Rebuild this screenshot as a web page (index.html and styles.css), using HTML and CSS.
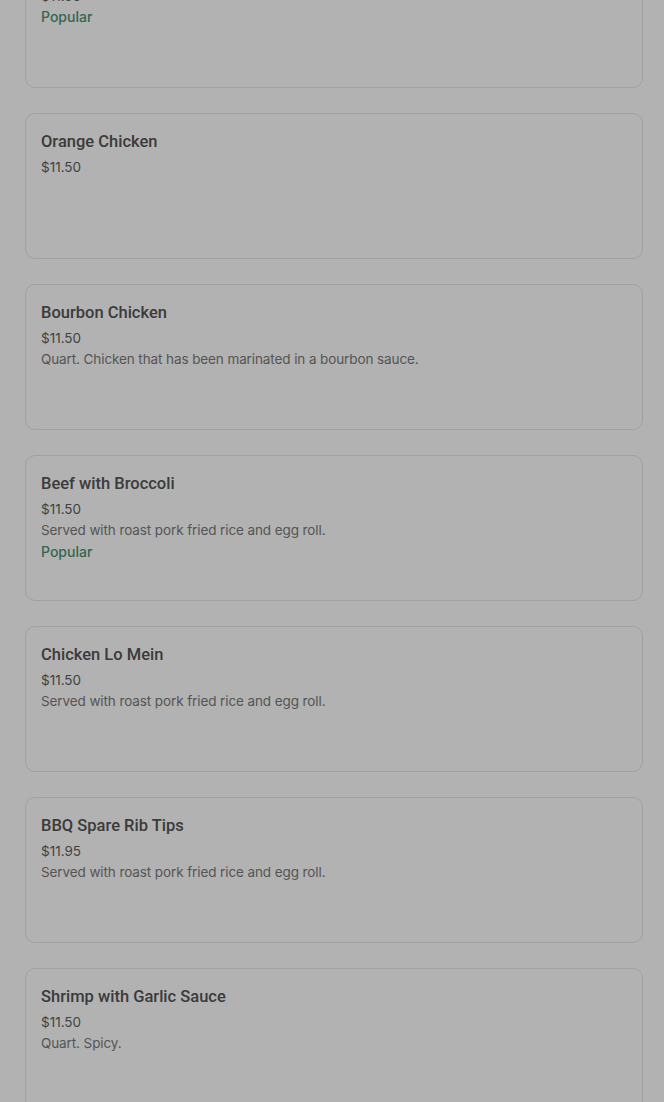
FILE: index.html
```html
<!DOCTYPE html>
<html lang="en">

<head>
    <meta charset="UTF-8">
    <title>Menu</title>
    <link rel="stylesheet" href="styles.css">
</head>

<body>
<div class="menu">
    <div class="item">
        <div class="item-name">General Tso's Chicken</div>
        <div class="item-price">$11.50</div>
        <div class="item-tag">Popular</div>
    </div>
    <div class="item">
        <div class="item-name">Orange Chicken</div>
        <div class="item-price">$11.50</div>
    </div>
    <div class="item">
        <div class="item-name">Bourbon Chicken</div>
        <div class="item-price">$11.50</div>
        <div class="item-desc">Quart. Chicken that has been marinated in a bourbon sauce.</div>
    </div>
    <div class="item">
        <div class="item-name">Beef with Broccoli</div>
        <div class="item-price">$11.50</div>
        <div class="item-desc">Served with roast pork fried rice and egg roll.</div>
        <div class="item-tag">Popular</div>
    </div>
    <div class="item">
        <div class="item-name">Chicken Lo Mein</div>
        <div class="item-price">$11.50</div>
        <div class="item-desc">Served with roast pork fried rice and egg roll.</div>
    </div>
    <div class="item">
        <div class="item-name">BBQ Spare Rib Tips</div>
        <div class="item-price">$11.95</div>
        <div class="item-desc">Served with roast pork fried rice and egg roll.</div>
    </div>
    <div class="item">
        <div class="item-name">Shrimp with Garlic Sauce</div>
        <div class="item-price">$11.50</div>
        <div class="item-desc">Quart. Spicy.</div>
    </div>
</div>
<div class="backdrop"></div>
</body>

</html>
```

FILE: styles.css
```css
body {
    font-family: 'Inter', 'Roboto', sans-serif;
    margin: 0;
    background-color: #fff;
    overflow: hidden;
}

.menu {
    display: flex;
    flex-direction: column;
    gap: 25px;
    padding: 0 21px 0 25px;
    margin-top: -58px;
}

.item {
    height: 146px;
    box-sizing: border-box;
    padding: 18px 15px;
    border: 1px solid #e6e6e6;
    border-radius: 10px;
    background-color: #fff;
}

.item-name {
    font-family: 'Roboto', sans-serif;
    font-size: 16.5px;
    line-height: 20px;
    font-weight: 500;
    color: #555;
    margin-bottom: 5px;
}

.item-price {
    font-size: 13.5px;
    line-height: 20px;
    color: #5e5e5e;
}

.item-desc {
    font-size: 13.5px;
    line-height: 22px;
    letter-spacing: -0.1px;
    color: #7a7a7a;
}

.item-tag {
    font-size: 14px;
    line-height: 22px;
    font-weight: 500;
    color: #4a9470;
}

.backdrop {
    position: fixed;
    inset: 0;
    background-color: rgba(0, 0, 0, 0.3);
}
```
